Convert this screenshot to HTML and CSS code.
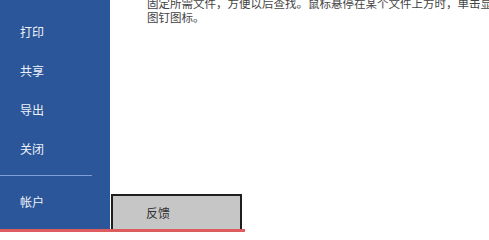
FILE: index.html
```html
<!DOCTYPE html>
<html lang="zh-CN">
<head>
<meta charset="utf-8">
<title>帐户</title>
<link rel="stylesheet" href="styles.css">
</head>
<body>
<div class="app">
  <div class="top">
    <nav class="sidebar">
      <div class="item">打印</div>
      <div class="item">共享</div>
      <div class="item">导出</div>
      <div class="item">关闭</div>
      <div class="sep"></div>
      <div class="item account">帐户</div>
    </nav>
    <main class="main">
      <p class="desc">固定所需文件，方便以后查找。鼠标悬停在某个文件上方时，单击显示<br>图钉图标。</p>
      <div class="feedback">反馈</div>
    </main>
  </div>
  <div class="redbar"></div>
</div>
</body>
</html>
```
FILE: styles.css
```css
html, body {
  margin: 0;
  padding: 0;
  background: #ffffff;
  overflow: hidden;
}
body {
  font-family: "Noto Sans CJK SC", "Noto Sans", sans-serif;
}
.app {
  width: 489px;
  height: 232px;
  display: flex;
  flex-direction: column;
  overflow: hidden;
}
.top {
  display: flex;
  height: 229px;
}
.sidebar {
  width: 110px;
  flex: none;
  background: #2b579a;
  padding-top: 12px;
  box-sizing: border-box;
}
.item {
  height: 39px;
  line-height: 39px;
  padding-left: 20px;
  font-size: 12px;
  color: #eef2f8;
}
.sep {
  width: 92px;
  height: 1px;
  background: #7d9fd6;
  margin-top: 7px;
}
.account {
  margin-top: 6px;
}
.main {
  flex: 1;
  display: flex;
  flex-direction: column;
  justify-content: space-between;
  min-width: 0;
}
.desc {
  margin: -4px 0 0 0;
  padding-left: 37px;
  font-size: 11.5px;
  line-height: 14px;
  color: #444444;
  white-space: nowrap;
}
.feedback {
  width: 131px;
  height: 35px;
  margin-left: 1px;
  box-sizing: border-box;
  border: 2px solid #1e1e1e;
  border-bottom: none;
  background: #c6c6c6;
  color: #333333;
  font-size: 12px;
  line-height: 33px;
  padding-left: 33px;
}
.redbar {
  width: 245px;
  height: 3px;
  background: #dc5c60;
}
```
